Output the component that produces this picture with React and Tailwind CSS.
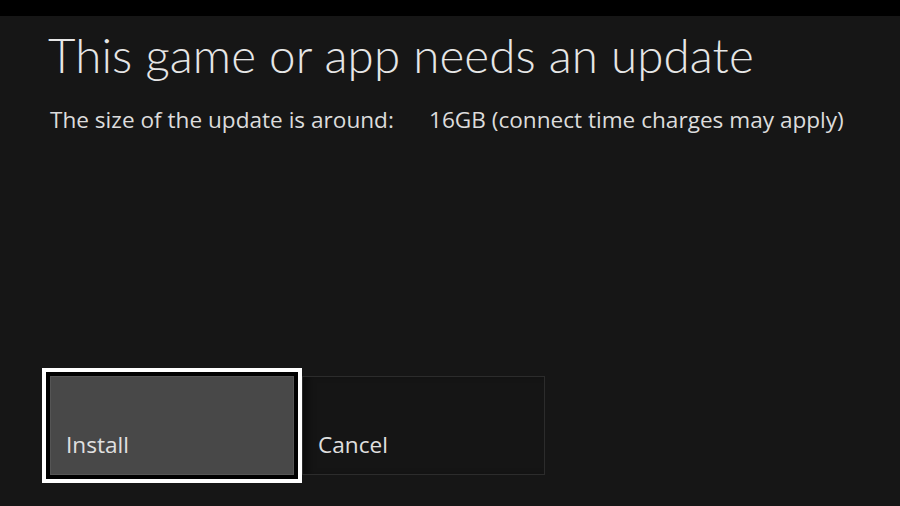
import React from "react";

const App = () => {
  return (
    <div
      className="w-[900px] h-[506px] bg-[#161616] flex flex-col overflow-hidden"
      style={{ fontFamily: '"Open Sans", "Noto Sans", sans-serif' }}
    >
      <div className="h-[16px] bg-black shrink-0" />

      <div className="pl-[48px] pt-[9px] flex-1 flex flex-col">
        <h1 className="text-[47.5px] leading-[60px] font-light font-['Lato',sans-serif] text-[#e6e6e6] tracking-[0.1px]">
          This game or app needs an update
        </h1>

        <div className="mt-[20px] flex text-[22.6px] leading-[30px] text-[#dcdcdc] pl-[2px]">
          <span className="w-[379px]">The size of the update is around:</span>
          <span>16GB (connect time charges may apply)</span>
        </div>

        <div className="mt-auto mb-[23px] flex items-center">
          <div className="border-[4px] border-white ml-[-6px]">
            <div className="border-[4px] border-black">
              <button className="w-[244px] h-[99px] bg-[#484848] border border-[#555] flex items-end pl-[15px] pb-[14px] text-[22.6px] leading-[30px] text-[#e0e0e0]">
                Install
              </button>
            </div>
          </div>
          <button className="w-[243px] h-[99px] bg-[#151515] border border-[#2c2c2c] flex items-end pl-[15px] pb-[14px] text-[22.6px] leading-[30px] text-[#e0e0e0] shadow-[inset_8px_0_8px_-4px_rgba(0,0,0,0.5)]">
            Cancel
          </button>
        </div>
      </div>
    </div>
  );
};

export default App;
